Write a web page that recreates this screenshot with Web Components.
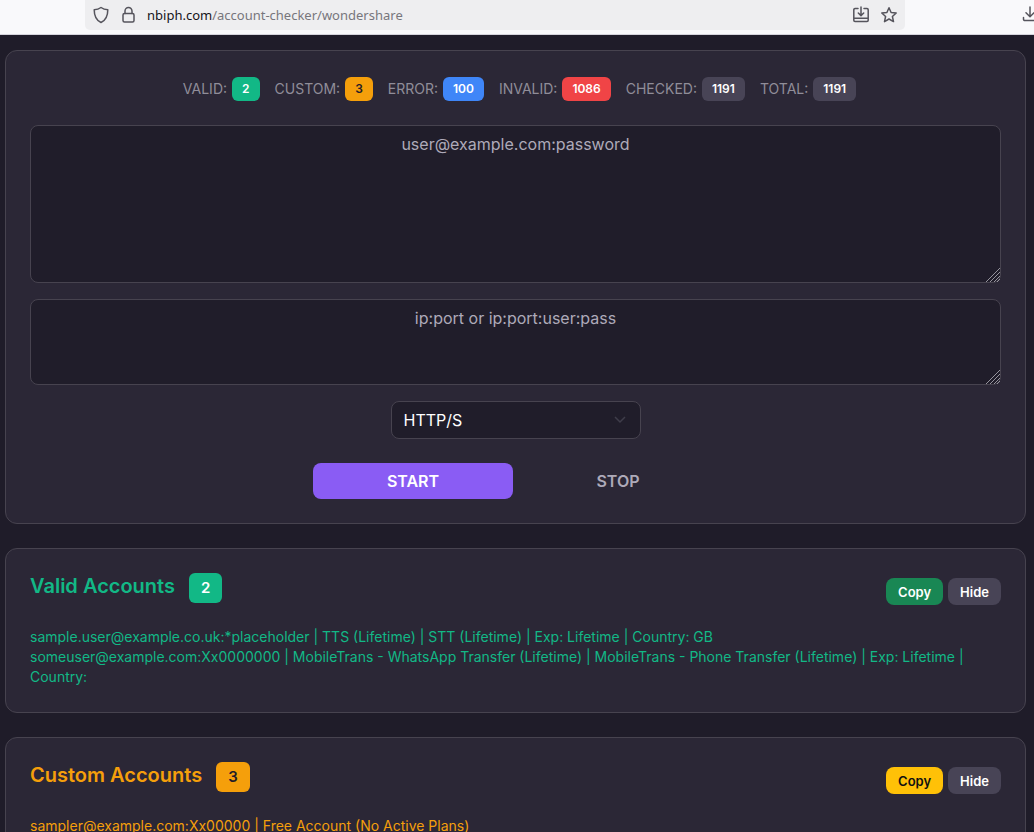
<!DOCTYPE html>
<html lang="en">
<head>
<meta charset="UTF-8">
<meta name="viewport" content="width=device-width, initial-scale=1.0">
<title>Account Checker</title>
<style>
    :root {
        --page-background: #1f1c29;
        --card-background: #2b2736;
        --field-background: #201d2a;
        --border-color: #47434f;
        --muted-color: #908d99;
        --neutral-color: #484456;
        --success-color: #12b886;
        --warning-color: #f59f0b;
        --info-color: #3f86f8;
        --danger-color: #f04446;
        --primary-color: #8a5cf4;
    }

    body {
        margin: 0;
        height: 100vh;
        display: flex;
        flex-direction: column;
        overflow: hidden;
        background-color: var(--page-background);
        color: #fff;
        font: 16px/24px Inter, "Liberation Sans", sans-serif;
    }

    main {
        flex: 1;
        min-height: 0;
        overflow-y: auto;
        scrollbar-width: none;
        display: flex;
        flex-direction: column;
        gap: 24px;
        padding: 15px 8px 24px 5px;
    }
</style>
</head>
<body>
<browser-bar host="nbiph.com" path="/account-checker/wondershare"></browser-bar>
<main>
    <checker-form>
        <stat-item label="VALID:" value="2" tone="success"></stat-item>
        <stat-item label="CUSTOM:" value="3" tone="warning"></stat-item>
        <stat-item label="ERROR:" value="100" tone="info"></stat-item>
        <stat-item label="INVALID:" value="1086" tone="danger"></stat-item>
        <stat-item label="CHECKED:" value="1191" tone="neutral"></stat-item>
        <stat-item label="TOTAL:" value="1191" tone="neutral"></stat-item>
    </checker-form>
    <result-card name="Valid Accounts" count="2" tone="success">
        <div>sample.user@example.co.uk:*placeholder | TTS (Lifetime) | STT (Lifetime) | Exp: Lifetime | Country: GB</div>
        <div>someuser@example.com:Xx0000000 | MobileTrans - WhatsApp Transfer (Lifetime) | MobileTrans - Phone Transfer (Lifetime) | Exp: Lifetime | Country:</div>
    </result-card>
    <result-card name="Custom Accounts" count="3" tone="warning">
        <div>sampler@example.com:Xx00000 | Free Account (No Active Plans)</div>
    </result-card>
</main>

<script>
class BrowserBar extends HTMLElement {
    constructor() {
        super();
        this.attachShadow({ mode: 'open' });
    }

    connectedCallback() {
        this.shadowRoot.innerHTML = `
            <style>
                :host {
                    display: flex;
                    flex: none;
                    height: 34px;
                    padding-left: 85px;
                    overflow: hidden;
                    background-color: #f9f9fb;
                    border-bottom: 1px solid #d5d4dc;
                    color: #55545c;
                }

                .address {
                    flex: 1;
                    display: flex;
                    align-items: center;
                    gap: 12px;
                    height: 30px;
                    padding: 0 8px;
                    box-sizing: border-box;
                    background-color: #eeeef0;
                    border-radius: 0 0 5px 5px;
                }

                .url {
                    flex: 1;
                    font: 13px/20px "Noto Sans", "Open Sans", sans-serif;
                    color: #77767c;
                }

                b {
                    font-weight: 400;
                    color: #15141a;
                }

                svg {
                    display: block;
                    flex: none;
                    fill: none;
                    stroke: currentColor;
                    stroke-width: 1.5;
                    stroke-linecap: round;
                    stroke-linejoin: round;
                }

                .downloads {
                    padding-top: 6px;
                    margin: 0 -4px 0 117px;
                }
            </style>
            <div class="address">
                <svg width="16" height="18" viewBox="0 0 16 18"><path d="M8 1.5C6 3 3.600 3.700 1.200 3.800c0 6 1.300 10.300 6.800 12.700 5.500-2.400 6.800-6.700 6.800-12.700C12.400 3.700 10 3 8 1.500z"/></svg>
                <svg width="14" height="18" viewBox="0 0 14 18"><rect x="2" y="7.500" width="11" height="8.500" rx="1.500"/><path d="M4 7.500V5a3.500 3.500 0 0 1 7 0v2.500"/></svg>
                <span class="url"><b>${this.getAttribute('host')}</b>${this.getAttribute('path')}</span>
                <svg width="16" height="18" viewBox="0 0 16 18"><path d="M5 2.500H2a1.200 1.200 0 0 0-1.200 1.200v10.600a1.200 1.200 0 0 0 1.200 1.200h12a1.200 1.200 0 0 0 1.200-1.200V3.700A1.200 1.200 0 0 0 14 2.500h-3M.8 12.200h14.400M8 1v8.500M5.300 7L8 9.600 10.700 7"/></svg>
                <svg width="16" height="18" viewBox="0 0 16 18"><path d="M8 1.800l2.100 4.700 5.100.5-3.800 3.500 1.100 5.100L8 13l-4.500 2.600 1.100-5.100L.8 7l5.100-.5z"/></svg>
            </div>
            <svg class="downloads" width="16" height="16" viewBox="0 0 16 16"><path d="M8 1v9.500M4 6.700l4 4 4-4M1.500 11.500v1.700a1.300 1.300 0 0 0 1.300 1.300h10.400a1.300 1.300 0 0 0 1.300-1.300v-1.700"/></svg>
        `;
    }
}

class StatItem extends HTMLElement {
    constructor() {
        super();
        this.attachShadow({ mode: 'open' });
    }

    connectedCallback() {
        const tone = this.getAttribute('tone');

        this.shadowRoot.innerHTML = `
            <style>
                :host {
                    display: flex;
                    align-items: center;
                    gap: 5px;
                    font-size: 14px;
                    color: var(--muted-color);
                }

                .badge {
                    padding: 0 10px;
                    border-radius: 6px;
                    background-color: var(--${tone}-color);
                    color: ${tone === 'warning' ? '#1f1c29' : '#fff'};
                    font-size: 12px;
                    font-weight: 600;
                }
            </style>
            <span>${this.getAttribute('label')}</span>
            <span class="badge">${this.getAttribute('value')}</span>
        `;
    }
}

class ListField extends HTMLElement {
    constructor() {
        super();
        this.attachShadow({ mode: 'open' });
    }

    connectedCallback() {
        const hint = this.getAttribute('hint');

        this.shadowRoot.innerHTML = `
            <style>
                :host {
                    display: block;
                    position: relative;
                }

                textarea {
                    display: block;
                    width: 100%;
                    box-sizing: border-box;
                    padding: 6px 12px;
                    background-color: var(--field-background);
                    border: 1px solid var(--border-color);
                    border-radius: 8px;
                    color: #fff;
                    font: inherit;
                    text-align: center;
                    resize: none;
                }

                textarea::placeholder {
                    color: #aeaab9;
                }

                .grip {
                    position: absolute;
                    right: 1px;
                    bottom: 1px;
                    fill: none;
                    stroke: #96949d;
                    stroke-width: 1;
                }
            </style>
            <textarea rows="${this.getAttribute('rows')}" placeholder="${hint}" aria-label="${hint}"></textarea>
            <svg class="grip" width="14" height="14" viewBox="0 0 14 14"><path d="M0 14L14 0M4 14L14 4M8 14L14 8M11 14L14 11"/></svg>
        `;
    }
}

class CheckerForm extends HTMLElement {
    constructor() {
        super();
        this.attachShadow({ mode: 'open' });
    }

    connectedCallback() {
        this.shadowRoot.innerHTML = `
            <style>
                :host {
                    display: flex;
                    flex-direction: column;
                    flex: none;
                    gap: 16px;
                    padding: 24px;
                    background-color: var(--card-background);
                    border: 1px solid var(--border-color);
                    border-radius: 12px;
                }

                .stats {
                    display: flex;
                    flex-wrap: wrap;
                    justify-content: center;
                    gap: 15px;
                    padding: 2px 0 8px 8px;
                }

                .proxy {
                    position: relative;
                    align-self: center;
                    width: 250px;
                }

                select {
                    display: block;
                    width: 100%;
                    height: 38px;
                    padding: 0 12px;
                    appearance: none;
                    background-color: var(--field-background);
                    border: 1px solid var(--border-color);
                    border-radius: 8px;
                    color: #fff;
                    font: inherit;
                }

                .arrow {
                    position: absolute;
                    right: 15px;
                    top: 13px;
                    fill: none;
                    stroke: #3f3d4a;
                    stroke-width: 1.5;
                    pointer-events: none;
                }

                .actions {
                    display: flex;
                    justify-content: center;
                    gap: 5px;
                    padding-top: 8px;
                }

                button {
                    width: 200px;
                    height: 36px;
                    border: none;
                    border-radius: 8px;
                    background: none;
                    color: #aeaab9;
                    font: inherit;
                    font-weight: 600;
                }

                .start {
                    background-color: var(--primary-color);
                    color: #fff;
                }
            </style>
            <div class="stats"><slot></slot></div>
            <list-field rows="6" hint="user@example.com:password"></list-field>
            <list-field rows="3" hint="ip:port or ip:port:user:pass"></list-field>
            <div class="proxy">
                <select aria-label="Proxy type"><option>HTTP/S</option></select>
                <svg class="arrow" width="12" height="12" viewBox="0 0 12 12"><path d="M1 3l5 5 5-5"/></svg>
            </div>
            <div class="actions">
                <button class="start" type="button">START</button>
                <button type="button">STOP</button>
            </div>
        `;
    }
}

class ResultCard extends HTMLElement {
    constructor() {
        super();
        this.attachShadow({ mode: 'open' });
    }

    connectedCallback() {
        const tone = this.getAttribute('tone');
        const dark = tone === 'warning';

        this.shadowRoot.innerHTML = `
            <style>
                :host {
                    display: flex;
                    flex-direction: column;
                    flex: none;
                    gap: 20px;
                    padding: 24px 24px 25px;
                    background-color: var(--card-background);
                    border: 1px solid var(--border-color);
                    border-radius: 12px;
                    color: var(--${tone}-color);
                }

                header {
                    display: flex;
                    justify-content: space-between;
                    height: 34px;
                }

                h2 {
                    display: flex;
                    gap: 14px;
                    margin: 0;
                    font-size: 20px;
                    line-height: 26px;
                    font-weight: 600;
                }

                .count {
                    height: 30px;
                    padding: 0 12px;
                    border-radius: 6px;
                    background-color: var(--${tone}-color);
                    color: ${dark ? '#1f1c29' : '#fff'};
                    font-size: 15px;
                    line-height: 30px;
                }

                .tools {
                    display: flex;
                    align-items: flex-start;
                    gap: 5px;
                    padding-top: 5px;
                }

                button {
                    height: 27px;
                    padding: 0 12px;
                    border: none;
                    border-radius: 8px;
                    background-color: var(--neutral-color);
                    color: #fff;
                    font: inherit;
                    font-size: 13px;
                    font-weight: 600;
                }

                .copy {
                    background-color: ${dark ? '#ffc107' : '#198754'};
                    color: ${dark ? '#111' : '#fff'};
                }

                .list {
                    font-size: 14px;
                    line-height: 20px;
                }
            </style>
            <header>
                <h2>${this.getAttribute('name')} <span class="count">${this.getAttribute('count')}</span></h2>
                <div class="tools">
                    <button class="copy" type="button">Copy</button>
                    <button type="button">Hide</button>
                </div>
            </header>
            <div class="list"><slot></slot></div>
        `;
    }
}

customElements.define('browser-bar', BrowserBar);
customElements.define('stat-item', StatItem);
customElements.define('list-field', ListField);
customElements.define('checker-form', CheckerForm);
customElements.define('result-card', ResultCard);
</script>
</body>
</html>
